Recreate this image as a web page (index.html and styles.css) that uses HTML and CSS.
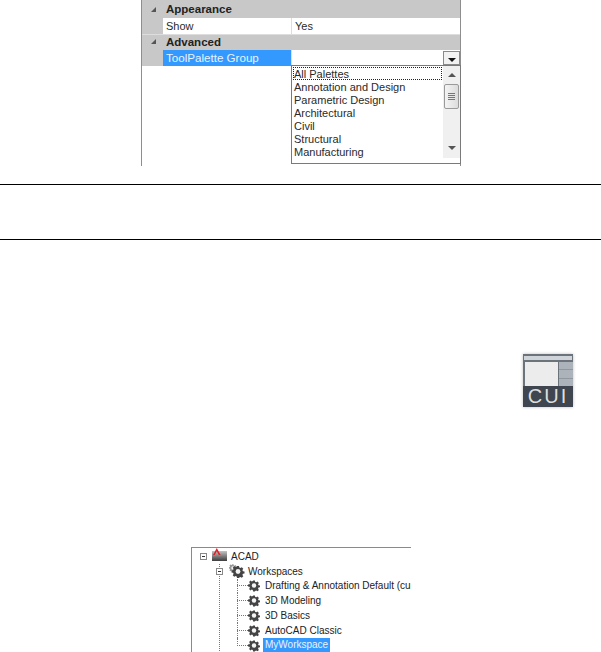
FILE: index.html
```html
<!DOCTYPE html>
<html lang="en">
<head>
  <meta charset="UTF-8" />
  <title>Workspace palettes</title>
  <link rel="stylesheet" href="styles.css">
</head>
<body>
  <svg class="defs" width="0" height="0">
    <defs>
      <g id="gear">
        <path d="M5 .5h2l.3 1.600 1.100.5 1.400-.9 1.500 1.500-.9 1.400.5 1.100 1.600.3v2l-1.600.3-.5 1.100.9 1.400-1.500 1.500-1.400-.9-1.100.5L7 12.500H5l-.3-1.600-1.100-.5-1.400.9L.7 9.800l.9-1.400-.5-1.100L-.5 7V5l1.600-.3.5-1.100-.9-1.400L2.200.7l1.400.9 1.100-.5z" fill="#444"/>
        <circle cx="6" cy="6" r="2.400" fill="#f4f4f4"/>
      </g>
    </defs>
  </svg>

  <div class="panel">
    <div class="section"><span class="caret"></span>Appearance</div>
    <div class="prop">
      <div class="prop-name">Show</div>
      <div class="prop-value">Yes</div>
    </div>
    <div class="section"><span class="caret"></span>Advanced</div>
    <div class="prop">
      <div class="prop-name selected">ToolPalette Group</div>
      <div class="prop-value">
        <div class="drop-btn"><span class="arrow-down"></span></div>
      </div>
    </div>

    <div class="dropdown">
      <ul class="options">
        <li class="focused">All Palettes</li>
        <li>Annotation and Design</li>
        <li>Parametric Design</li>
        <li>Architectural</li>
        <li>Civil</li>
        <li>Structural</li>
        <li>Manufacturing</li>
      </ul>
      <div class="scrollbar">
        <span class="sb-up"></span>
        <div class="sb-thumb"><i></i><i></i><i></i><i></i></div>
        <span class="sb-down"></span>
      </div>
    </div>
  </div>

  <div class="note"></div>

  <div class="cui-icon">
    <div class="cui-title"></div>
    <div class="cui-panes">
      <div class="cui-main"></div>
      <div class="cui-side"><i></i><i></i><i></i></div>
    </div>
    <div class="cui-label">CUI</div>
  </div>

  <div class="tree">
    <div class="row root-row">
      <span class="expander"></span>
      <svg class="acad-icon" width="16" height="13" viewBox="0 0 16 13">
        <defs>
          <linearGradient id="box" x1="0" y1="0" x2="0" y2="1">
            <stop offset="0" stop-color="#c4c4c4"/>
            <stop offset="1" stop-color="#3c3c3c"/>
          </linearGradient>
        </defs>
        <rect x="0" y="3" width="15" height="10" fill="url(#box)"/>
        <path d="M1 7 4.800 0 8.600 7H6.800L4.800 3.200 2.800 7z" fill="#e0202a"/>
      </svg>
      <span class="label">ACAD</span>
    </div>
    <div class="branch">
      <div class="row ws-row">
        <span class="expander"></span>
        <svg class="ws-icon" width="16" height="14" viewBox="0 0 16 14">
          <use href="#gear" transform="translate(0 0) scale(.65)" opacity=".55"/>
          <use href="#gear" transform="translate(3 1.500) scale(1)"/>
        </svg>
        <span class="label">Workspaces</span>
      </div>
      <div class="leaves">
        <div class="row leaf"><span class="twig"></span><svg class="gear" width="12" height="13" viewBox="-.5 -.5 13 13"><use href="#gear"/></svg><span class="label">Drafting &amp; Annotation Default (current)</span></div>
        <div class="row leaf"><span class="twig"></span><svg class="gear" width="12" height="13" viewBox="-.5 -.5 13 13"><use href="#gear"/></svg><span class="label">3D Modeling</span></div>
        <div class="row leaf"><span class="twig"></span><svg class="gear" width="12" height="13" viewBox="-.5 -.5 13 13"><use href="#gear"/></svg><span class="label">3D Basics</span></div>
        <div class="row leaf"><span class="twig"></span><svg class="gear" width="12" height="13" viewBox="-.5 -.5 13 13"><use href="#gear"/></svg><span class="label">AutoCAD Classic</span></div>
        <div class="row leaf last"><span class="twig"></span><svg class="gear" width="12" height="13" viewBox="-.5 -.5 13 13"><use href="#gear"/></svg><span class="label current">MyWorkspace</span></div>
      </div>
    </div>
  </div>
</body>
</html>
```

FILE: styles.css
```css
html, body {
  height: 652px;
  overflow: hidden;
}
body {
  margin: 0;
  background: #fff;
  color: #2a2a2a;
  font-family: "Liberation Sans", Arial, sans-serif;
  font-size: 11px;
}
.defs {
  display: block;
  height: 0;
}

/* property panel */
.panel {
  position: relative;
  box-sizing: border-box;
  width: 320px;
  height: 166px;
  padding-top: 2px;
  margin-left: 141px;
  border-left: 1px solid #8e8e8e;
  border-right: 1px solid #8e8e8e;
  background: linear-gradient(#c8c8c8 2px, transparent 2px);
}
.section {
  box-sizing: border-box;
  display: flex;
  align-items: center;
  height: 16px;
  padding-bottom: 2px;
  background: #c8c8c8;
  font-weight: bold;
  font-size: 11.500px;
  color: #222;
}
.caret {
  width: 0;
  height: 0;
  margin: 0 10px 0 9px;
  border-bottom: 5px solid #555;
  border-left: 5px solid transparent;
}
.prop {
  display: flex;
  height: 16px;
  background: #c8c8c8;
  padding-left: 21px;
}
.prop + .section {
  border-top: 1px solid #ddd;
}
.prop-name {
  width: 128px;
  padding-left: 3px;
  box-sizing: border-box;
  line-height: 16px;
  background: #fff;
}
.prop-name.selected {
  background: #3399ff;
  color: #e8f3ff;
  font-size: 11.600px;
}
.prop-value {
  position: relative;
  flex: 1;
  padding-left: 3px;
  line-height: 16px;
  background: #fff;
  border-left: 1px solid #ddd;
}
.drop-btn {
  position: absolute;
  top: 1px;
  right: 0;
  box-sizing: border-box;
  width: 17px;
  height: 14px;
  border: 1px solid #8a8a8a;
  background: #f2f2f2;
}
.arrow-down {
  position: absolute;
  left: 4px;
  top: 6px;
  border-top: 4px solid #111;
  border-left: 4px solid transparent;
  border-right: 4px solid transparent;
}

/* open list */
.dropdown {
  position: absolute;
  top: 65px;
  left: 149px;
  right: -1px;
  height: 99px;
  box-sizing: border-box;
  display: flex;
  background: #fff;
  border: 1px solid #7a7a7a;
}
.options {
  flex: 1;
  margin: 0 1px 0 0;
  padding: 1px 0 0 1px;
  list-style: none;
}
.options li {
  height: 13px;
  padding-left: 1px;
  line-height: 12px;
  box-sizing: border-box;
  border: 1px solid transparent;
  border-left: 0;
}
.options .focused {
  border: 1px dotted #222;
  padding-left: 0;
}
.scrollbar {
  position: relative;
  width: 17px;
  height: 92px;
  background: #f0f0f0;
}
.sb-up, .sb-down {
  position: absolute;
  left: 5px;
  border-left: 4px solid transparent;
  border-right: 4px solid transparent;
}
.sb-up {
  top: 7px;
  border-bottom: 4px solid #555;
}
.sb-down {
  top: 80px;
  border-top: 4px solid #555;
}
.sb-thumb {
  position: absolute;
  top: 18px;
  left: 1px;
  box-sizing: border-box;
  width: 15px;
  height: 25px;
  display: flex;
  flex-direction: column;
  justify-content: center;
  gap: 1px;
  padding: 0 3px;
  border: 1px solid #9a9a9a;
  border-radius: 2px;
  background: linear-gradient(90deg, #f4f4f4, #dcdcdc);
}
.sb-thumb i {
  display: block;
  height: 1px;
  background: #777;
}

/* note rules */
.note {
  height: 54px;
  margin-top: 18px;
  border-top: 1px solid #000;
  border-bottom: 1px solid #000;
}

/* CUI button */
.cui-icon {
  box-sizing: border-box;
  width: 50px;
  height: 53px;
  margin: 114px 0 0 523px;
  padding-top: 2px;
  display: flex;
  flex-direction: column;
  background: #6d737b;
  box-shadow: 0 0 3px #bbb;
}
.cui-title {
  height: 4px;
  margin: 0 1px 2px;
  background: #cfd4da;
}
.cui-panes {
  display: flex;
  gap: 1px;
  height: 25px;
  padding: 0 0 0 2px;
}
.cui-main {
  width: 33px;
  background: #ececec;
}
.cui-side {
  flex: 1;
  display: flex;
  flex-direction: column;
  gap: 1px;
  background: #91979e;
}
.cui-side i {
  flex: 1;
  background: #adb3ba;
}
.cui-label {
  flex: 1;
  text-align: center;
  font-size: 20px;
  line-height: 21px;
  letter-spacing: 2px;
  color: #dedede;
  background: #3f4650;
}

/* workspace tree */
.tree {
  box-sizing: border-box;
  width: 220px;
  height: 105px;
  margin: 140px 0 0 191px;
  padding-top: 1px;
  border-top: 1px solid #8a8a8a;
  border-left: 1px solid #8a8a8a;
  overflow: hidden;
  font-size: 10px;
  color: #222;
}
.row {
  display: flex;
  align-items: center;
  height: 14.800px;
  white-space: nowrap;
}
.expander {
  position: relative;
  box-sizing: border-box;
  flex: none;
  width: 7px;
  height: 7px;
  border: 1px solid #888;
  background: #fff;
}
.expander::before {
  content: "";
  position: absolute;
  left: 1px;
  top: 2px;
  width: 3px;
  height: 1px;
  background: #333;
}
.root-row {
  padding-left: 8px;
}
.acad-icon {
  margin: -3px 3px 0 5px;
  flex: none;
}
.branch {
  margin-left: 27px;
  border-left: 1px dotted #777;
}
.ws-row {
  margin-left: -4px;
}
.ws-icon {
  margin: 0 3px 0 6px;
  flex: none;
}
.leaves {
  margin-left: 17px;
}
.leaf {
  position: relative;
}
.leaf::before {
  content: "";
  position: absolute;
  left: 0;
  top: 0;
  bottom: 0;
  border-left: 1px dotted #777;
}
.leaf.last::before {
  bottom: 7px;
}
.twig {
  flex: none;
  width: 11px;
  border-top: 1px dotted #777;
}
.gear {
  flex: none;
  margin-right: 5px;
}
.current {
  margin-left: -2px;
  padding: 0 2px;
  line-height: 14px;
  background: #3399ff;
  color: #e8f3ff;
}
```
